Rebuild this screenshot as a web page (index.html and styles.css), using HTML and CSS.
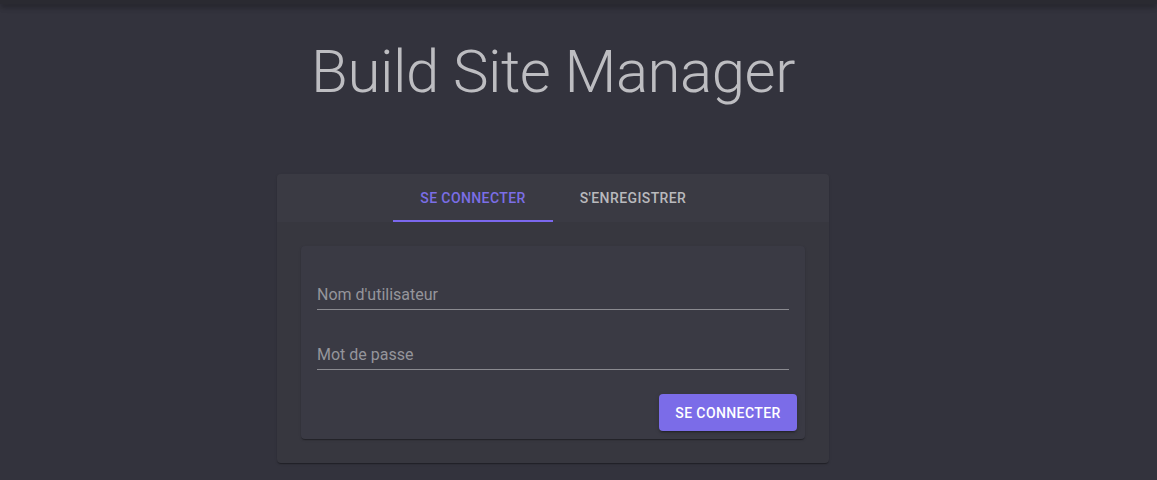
FILE: index.html
```html
<!DOCTYPE html>
<html lang="fr">
<head>
<meta charset="utf-8">
<title>Build Site Manager</title>
<link rel="stylesheet" href="styles.css">
</head>
<body>
<div class="topbar"></div>
<main class="main">
  <h1 class="title">Build Site Manager</h1>
  <section class="card">
    <nav class="tabs">
      <button class="tab tab-active">Se connecter</button>
      <button class="tab">S'enregistrer</button>
    </nav>
    <div class="card-body">
      <form class="inner-card">
        <div class="fields">
          <label class="field"><span class="field-label">Nom d'utilisateur</span></label>
          <label class="field"><span class="field-label">Mot de passe</span></label>
        </div>
        <div class="actions">
          <button type="button" class="btn">Se connecter</button>
        </div>
      </form>
    </div>
  </section>
</main>
</body>
</html>
```
FILE: styles.css
```css
* { box-sizing: border-box; }
html, body { margin: 0; padding: 0; }
body {
  background: #33333d;
  font-family: Roboto, "Noto Sans", sans-serif;
  height: 480px;
  overflow: hidden;
}
.topbar {
  height: 4px;
  background: #2a2a31;
  box-shadow: 0 2px 4px -1px rgba(0,0,0,.25), 0 4px 5px 0 rgba(0,0,0,.16), 0 1px 10px 0 rgba(0,0,0,.14);
  position: relative;
  z-index: 2;
}
.main {
  display: flex;
  flex-direction: column;
  align-items: center;
  padding-right: 51px;
}
.title {
  margin: 32px 0 0;
  font-weight: 300;
  font-size: 60px;
  line-height: 72px;
  color: #bdbdc1;
  letter-spacing: -0.008em;
}
.card {
  margin-top: 66px;
  width: 552px;
  background: #37373f;
  border-radius: 4px;
  box-shadow: 0 2px 1px -1px rgba(0,0,0,.2), 0 1px 1px 0 rgba(0,0,0,.14), 0 1px 3px 0 rgba(0,0,0,.12);
  overflow: hidden;
}
.tabs {
  height: 48px;
  background: #3a3a43;
  display: flex;
  justify-content: center;
}
.tab {
  width: 160px;
  height: 48px;
  border: 0;
  background: transparent;
  font-family: Roboto, sans-serif;
  font-weight: 500;
  font-size: 14px;
  letter-spacing: 0.02857em;
  text-transform: uppercase;
  color: #b9b9bd;
  padding: 0;
  border-bottom: 2px solid transparent;
  padding-top: 2px;
}
.tab-active {
  color: #7b6ee6;
  border-bottom-color: #7b68ee;
}
.card-body {
  padding: 24px;
}
.inner-card {
  background: #3a3a44;
  border-radius: 4px;
  box-shadow: 0 2px 1px -1px rgba(0,0,0,.2), 0 1px 1px 0 rgba(0,0,0,.14), 0 1px 3px 0 rgba(0,0,0,.12);
}
.fields {
  padding: 16px 16px 16px;
  display: flex;
  flex-direction: column;
  gap: 12px;
}
.field {
  display: block;
  height: 48px;
  padding-top: 23px;
  border-bottom: 1px solid #8a8a90;
}
.field-label {
  display: block;
  font-size: 16px;
  line-height: 19px;
  color: #95959b;
}
.actions {
  display: flex;
  justify-content: flex-end;
  padding: 8px;
}
.btn {
  height: 37px;
  width: 138px;
  padding: 0;
  border: 0;
  border-radius: 4px;
  background: #7b6ce8;
  color: #fff;
  font-family: Roboto, sans-serif;
  font-weight: 500;
  font-size: 14px;
  letter-spacing: 0.02857em;
  text-transform: uppercase;
  box-shadow: 0 3px 1px -2px rgba(0,0,0,.2), 0 2px 2px 0 rgba(0,0,0,.14), 0 1px 5px 0 rgba(0,0,0,.12);
}
```
